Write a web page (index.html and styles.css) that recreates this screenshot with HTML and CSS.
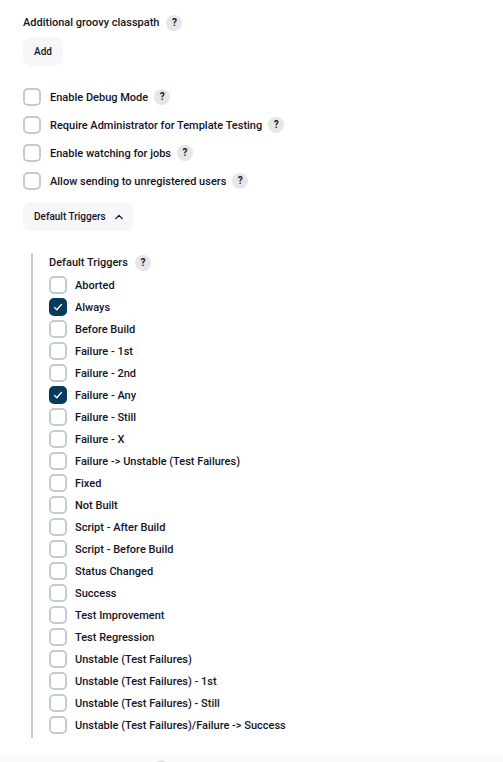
FILE: index.html
```html
<!DOCTYPE html>
<html lang="en">
<head>
<meta charset="utf-8">
<meta name="viewport" content="width=device-width, initial-scale=1">
<title>Extended E-mail Notification</title>
<link rel="stylesheet" href="styles.css">
</head>
<body>
<form class="config">
  <section class="field">
    <div class="heading">Additional groovy classpath <button type="button" class="help">?</button></div>
    <button type="button" class="button">Add</button>
  </section>
  <section class="options">
    <div class="option"><label class="check"><input type="checkbox">Enable Debug Mode</label><button type="button" class="help">?</button></div>
    <div class="option"><label class="check"><input type="checkbox">Require Administrator for Template Testing</label><button type="button" class="help">?</button></div>
    <div class="option"><label class="check"><input type="checkbox">Enable watching for jobs</label><button type="button" class="help">?</button></div>
    <div class="option"><label class="check"><input type="checkbox">Allow sending to unregistered users</label><button type="button" class="help">?</button></div>
  </section>
  <button type="button" class="button" aria-expanded="true">Default Triggers
    <svg class="chevron" viewBox="0 0 8 6" aria-hidden="true"><path d="M0.8 4.6 4 1.4 7.2 4.6"/></svg>
  </button>
  <section class="triggers">
    <div class="heading">Default Triggers <button type="button" class="help">?</button></div>
    <div class="list">
      <label class="check"><input type="checkbox">Aborted</label>
      <label class="check"><input type="checkbox" checked>Always</label>
      <label class="check"><input type="checkbox">Before Build</label>
      <label class="check"><input type="checkbox">Failure - 1st</label>
      <label class="check"><input type="checkbox">Failure - 2nd</label>
      <label class="check"><input type="checkbox" checked>Failure - Any</label>
      <label class="check"><input type="checkbox">Failure - Still</label>
      <label class="check"><input type="checkbox">Failure - X</label>
      <label class="check"><input type="checkbox">Failure -&gt; Unstable (Test Failures)</label>
      <label class="check"><input type="checkbox">Fixed</label>
      <label class="check"><input type="checkbox">Not Built</label>
      <label class="check"><input type="checkbox">Script - After Build</label>
      <label class="check"><input type="checkbox">Script - Before Build</label>
      <label class="check"><input type="checkbox">Status Changed</label>
      <label class="check"><input type="checkbox">Success</label>
      <label class="check"><input type="checkbox">Test Improvement</label>
      <label class="check"><input type="checkbox">Test Regression</label>
      <label class="check"><input type="checkbox">Unstable (Test Failures)</label>
      <label class="check"><input type="checkbox">Unstable (Test Failures) - 1st</label>
      <label class="check"><input type="checkbox">Unstable (Test Failures) - Still</label>
      <label class="check"><input type="checkbox">Unstable (Test Failures)/Failure -&gt; Success</label>
    </div>
  </section>
</form>
<div class="bottom-shade"></div>
</body>
</html>
```
FILE: styles.css
```css
* {
  box-sizing: border-box;
}

body {
  margin: 0;
  overflow: hidden;
  background: #fff;
  color: #14141f;
  font: 500 11px/17px Roboto, "Liberation Sans", sans-serif;
}

.config {
  padding: 14px 23px 0;
}

.heading {
  display: flex;
  align-items: center;
  gap: 7px;
}

.help {
  width: 16px;
  height: 16px;
  padding: 0;
  border: 0;
  border-radius: 50%;
  background: #e6e6e6;
  color: inherit;
  font: 700 10px/16px Roboto, "Liberation Sans", sans-serif;
}

.button {
  display: inline-flex;
  align-items: center;
  gap: 9px;
  height: 29px;
  padding: 0 11px;
  border: 0;
  border-radius: 8px;
  background: #f7f7f9;
  color: inherit;
  font-family: inherit;
  font-size: 10px;
  font-weight: 500;
}

.field {
  display: grid;
  justify-items: start;
  gap: 6px;
}

.options {
  display: grid;
  gap: 10px;
  margin: 22px 0 12px;
}

.option {
  display: flex;
  align-items: center;
  gap: 6px;
}

.check {
  display: flex;
  align-items: flex-end;
  gap: 9px;
}

.check input {
  appearance: none;
  width: 18px;
  height: 18px;
  flex: none;
  margin: 0;
  border: 2px solid #c2ccd1;
  border-radius: 5px;
  background: #fff;
}

.check input:checked {
  border-color: #063b5e;
  background: #063b5e url("data:image/svg+xml,%3Csvg xmlns='http://www.w3.org/2000/svg' viewBox='0 0 14 14'%3E%3Cpath d='M3.5 7.5 5.8 9.7 10.5 4.5' fill='none' stroke='white' stroke-width='1.3' stroke-linecap='round' stroke-linejoin='round'/%3E%3C/svg%3E") center / 14px 14px no-repeat;
}

.chevron {
  width: 8px;
  height: 6px;
  fill: none;
  stroke: currentColor;
  stroke-width: 1.3;
  stroke-linecap: round;
  stroke-linejoin: round;
}

.triggers {
  margin: 22px 0 0 8px;
  padding: 1px 0 4px 16px;
  border-left: 2px solid #c2ccd1;
}

.list {
  display: grid;
  justify-items: start;
  gap: 4px;
  margin-top: 5px;
}

.list .check {
  gap: 8px;
}

.bottom-shade {
  position: fixed;
  inset: auto 0 0;
  height: 12px;
  background:
    radial-gradient(circle at 161px 18px, #dedede 7px, transparent 8px),
    linear-gradient(to bottom, transparent, #f9f9f9);
}
```
